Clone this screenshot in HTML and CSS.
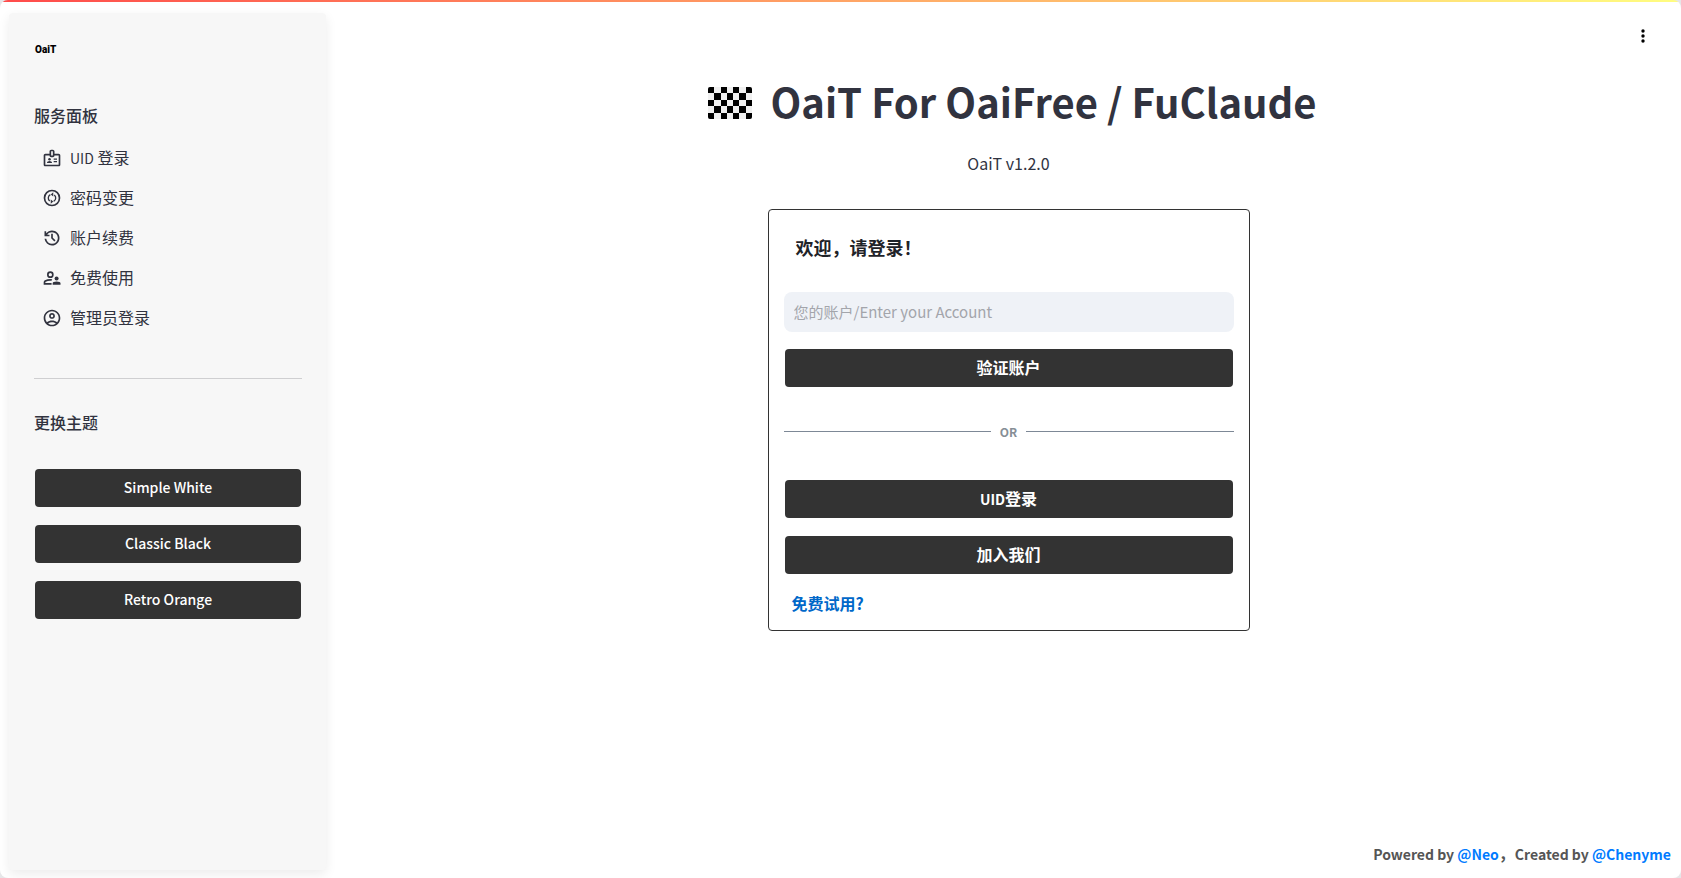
FILE: index.html
```html
<!DOCTYPE html>
<html lang="zh-CN">
<head>
<meta charset="utf-8">
<title>OaiT</title>
<link rel="stylesheet" href="styles.css">
</head>
<body>
<div class="app">
  <aside class="sidebar">
    <div class="logo">OaiT</div>
    <h2 class="section-title">服务面板</h2>
    <nav class="nav">
      <a class="nav-link" href="#uid">
        <svg class="icon" viewBox="0 0 24 24"><path d="M20 7h-5V4c0-1.100-.9-2-2-2h-2c-1.100 0-2 .9-2 2v3H4c-1.100 0-2 .9-2 2v11c0 1.100.9 2 2 2h16c1.100 0 2-.9 2-2V9c0-1.100-.9-2-2-2zm-9-3h2v5h-2V4zm9 16H4V9h5c0 1.100.9 2 2 2h2c1.100 0 2-.9 2-2h5v11z"/><circle cx="9" cy="13.500" r="1.500"/><path d="M6 18v-.43c0-.6.36-1.150.92-1.390a5.300 5.300 0 0 1 4.160 0c.56.240.92.780.92 1.390V18zM14 12.500h4V14h-4zM14 15.500h4V17h-4z"/></svg>
        <span class="nav-text"><span class="latin">UID</span> 登录</span>
      </a>
      <a class="nav-link" href="#password">
        <svg class="icon" viewBox="0 0 24 24"><path fill-rule="evenodd" d="M12 2a10 10 0 1 0 0 20 10 10 0 0 0 0-20zm0 18a8 8 0 1 1 0-16 8 8 0 0 1 0 16z"/><path d="M9.300 15.700A4.600 4.600 0 0 1 10 8M14.700 8.300A4.600 4.600 0 0 1 14 16" fill="none" stroke="currentColor" stroke-width="1.600"/><path d="M13.500 5.200v5L10.500 7.700zM10.500 13.800v5l3-2.500z"/></svg>
        <span class="nav-text">密码变更</span>
      </a>
      <a class="nav-link" href="#renew">
        <svg class="icon" viewBox="0 0 24 24"><path d="M12 21q-3.450 0-6.012-2.288T3.050 13H5.100q.35 2.600 2.313 4.300T12 19q2.925 0 4.963-2.038T19 12t-2.037-4.962T12 5q-1.725 0-3.225.8T6.250 8H9v2H3V4h2v2.350q1.275-1.600 3.113-2.475T12 3q1.875 0 3.513.713t2.850 1.925 1.925 2.850T21 12t-.712 3.513-1.925 2.850-2.850 1.925T12 21m2.800-4.800L11 12.400V7h2v4.600l3.200 3.200z"/></svg>
        <span class="nav-text">账户续费</span>
      </a>
      <a class="nav-link" href="#free">
        <svg class="icon" viewBox="0 0 24 24"><circle cx="10" cy="8" r="3" fill="none" stroke="currentColor" stroke-width="2"/><path d="M2 20v-2.800q0-1.700 1.500-2.400Q6.500 13.300 10 13.300l2.300.1-.9 2q-4-.4-6.800 1.100-.6.300-.6.900v.6h7.500v2z"/><circle cx="17.500" cy="12.700" r="2.400"/><path d="M12.800 20v-1.500q0-2.300 4.700-2.300t4.700 2.300V20z"/></svg>
        <span class="nav-text">免费使用</span>
      </a>
      <a class="nav-link" href="#admin">
        <svg class="icon" viewBox="0 0 24 24"><path d="M12 2C6.480 2 2 6.480 2 12s4.480 10 10 10 10-4.480 10-10S17.520 2 12 2zM7.350 18.500C8.660 17.560 10.260 17 12 17s3.340.56 4.650 1.500C15.340 19.440 13.740 20 12 20s-3.340-.56-4.650-1.500zm10.790-1.380C16.450 15.800 14.320 15 12 15s-4.450.8-6.140 2.120A7.960 7.960 0 0 1 4 12c0-4.420 3.580-8 8-8s8 3.580 8 8c0 1.950-.7 3.730-1.860 5.120z"/><path d="M12 6c-1.930 0-3.500 1.570-3.500 3.500S10.070 13 12 13s3.500-1.570 3.500-3.500S13.930 6 12 6zm0 5c-.83 0-1.500-.67-1.500-1.500S11.170 8 12 8s1.500.67 1.500 1.500S12.830 11 12 11z"/></svg>
        <span class="nav-text">管理员登录</span>
      </a>
    </nav>
    <hr class="rule">
    <h2 class="section-title">更换主题</h2>
    <div class="themes">
      <button class="button latin" type="button">Simple White</button>
      <button class="button latin" type="button">Classic Black</button>
      <button class="button latin" type="button">Retro Orange</button>
    </div>
  </aside>

  <main class="main">
    <header class="toolbar">
      <button class="menu" type="button" aria-label="Menu">
        <svg class="icon" viewBox="0 0 20 20"><circle cx="10" cy="5" r="1.700"/><circle cx="10" cy="10" r="1.700"/><circle cx="10" cy="15" r="1.700"/></svg>
      </button>
    </header>
    <div class="hero">
      <h1 class="title">
        <svg class="checker" viewBox="0 0 44 32" aria-hidden="true">
          <defs><clipPath id="round"><rect width="44" height="32" rx="2"/></clipPath></defs>
          <g clip-path="url(#round)">
            <rect width="44" height="32" fill="#f0f0f0"/>
            <path fill="#000" d="M0 0h6v6H0zM13 0h6v6h-6zM25 0h6v6h-6zM38 0h6v6h-6zM6 6h7v7H6zM19 6h6v7h-6zM31 6h7v7h-7zM0 13h6v6H0zM13 13h6v6h-6zM25 13h6v6h-6zM38 13h6v6h-6zM6 19h7v7H6zM19 19h6v7h-6zM31 19h7v7h-7zM0 26h6v6H0zM13 26h6v6h-6zM25 26h6v6h-6zM38 26h6v6h-6z"/>
          </g>
        </svg>
        <span class="title-text">OaiT For OaiFree / FuClaude</span>
      </h1>
      <p class="version">OaiT v1.2.0</p>
    </div>
    <form class="card">
      <h2 class="card-title">欢迎，请登录！</h2>
      <input class="field" type="text" placeholder="您的账户/Enter your Account" aria-label="您的账户/Enter your Account">
      <button class="button strong" type="button">验证账户</button>
      <div class="divider">OR</div>
      <button class="button strong" type="button"><span class="latin">UID</span>登录</button>
      <button class="button strong" type="button">加入我们</button>
      <a class="trial" href="#trial">免费试用?</a>
    </form>
    <footer class="footer">Powered by <a href="#neo">@Neo</a><span class="comma">，</span>Created by <a href="#chenyme">@Chenyme</a></footer>
  </main>
</div>
</body>
</html>
```
FILE: styles.css
```css
* { box-sizing: border-box; }

body {
  margin: 0;
  background: #e6e6e8;
  color: #31333f;
  font-family: "Noto Sans CJK SC", "Noto Sans", sans-serif;
  font-size: 16px;
  line-height: 24px;
}

.app {
  display: flex;
  min-height: 100vh;
  border-radius: 8px;
  background: linear-gradient(90deg, #ff4b4b, #fffd80) top / 100% 2px no-repeat #fff;
}

h1, h2, p { margin: 0; }
a { text-decoration: none; }
.latin { font-size: 14px; }

.sidebar {
  flex: 0 0 317px;
  margin: 13px 10px 8px 9px;
  padding: 25px 24px 24px 25px;
  border-radius: 4px;
  background: #f7f7f7;
  box-shadow: 0 4px 12px rgba(0, 0, 0, 0.08);
}

.logo {
  padding-left: 1px;
  color: #000;
  font-family: Roboto, sans-serif;
  font-size: 10px;
  font-weight: 900;
}

.section-title {
  font-size: 16px;
  font-weight: 500;
  line-height: 24px;
}

.logo + .section-title { margin-top: 41px; }

.nav {
  display: flex;
  flex-direction: column;
  gap: 8px;
  margin-top: 15px;
}

.nav-link {
  display: flex;
  align-items: center;
  gap: 8px;
  height: 32px;
  padding: 0 8px;
  color: #31333f;
}

.nav-text { padding-bottom: 2px; }

.icon {
  display: block;
  flex: none;
  width: 20px;
  height: 20px;
  fill: currentColor;
}

.rule {
  height: 1px;
  margin: 44px 0 31px;
  border: 0;
  background: #cfcfd1;
}

.themes {
  display: flex;
  flex-direction: column;
  gap: 18px;
  margin: 35px 1px 0;
}

.button {
  display: block;
  width: 100%;
  height: 38px;
  padding: 0 0 2px;
  border: 0;
  border-radius: 4px;
  background: #333;
  color: #fff;
  font-family: inherit;
  font-weight: 500;
  line-height: 24px;
}

.strong {
  font-size: 16px;
  font-weight: 700;
}

.main {
  display: flex;
  flex: 1;
  flex-direction: column;
  align-items: center;
  min-width: 0;
}

.toolbar {
  display: flex;
  justify-content: flex-end;
  width: 100%;
  padding: 20px 22px 0;
}

.menu {
  padding: 6px;
  border: 0;
  background: none;
  color: #000;
}

.hero {
  padding-top: 23px;
  text-align: center;
}

.title {
  display: flex;
  align-items: center;
  gap: 18px;
  padding-left: 8px;
  font-size: 40px;
  font-weight: 700;
  line-height: 52px;
}

.title-text { padding-bottom: 4px; }

.checker {
  width: 44px;
  height: 32px;
}

.version { margin-top: 20px; }

.card {
  display: flex;
  flex-direction: column;
  width: 100%;
  max-width: 482px;
  margin-top: 34px;
  padding: 23px 15px 15px;
  border: 1px solid #333;
  border-radius: 4px;
}

.card-title {
  margin-left: 12px;
  color: #1f2328;
  font-size: 18px;
  font-weight: 700;
  line-height: 28px;
}

.field {
  width: 100%;
  height: 40px;
  margin: 31px 0 17px;
  padding: 0 10px 2px;
  border: 0;
  border-radius: 8px;
  background: #eff2f7;
  color: #31333f;
  font-family: inherit;
  font-size: 15px;
}

.field::placeholder { color: #a3a5ab; }

.card .button {
  width: auto;
  margin: 0 1px;
}

.divider {
  display: flex;
  align-items: center;
  gap: 9px;
  margin: 32px 0 36px;
  color: #868e96;
  font-size: 12px;
  font-weight: 700;
  line-height: 25px;
}

.divider::before,
.divider::after {
  flex: 1;
  height: 1px;
  background: #7d8896;
  content: "";
}

.card .button + .button { margin-top: 18px; }

.trial {
  align-self: flex-start;
  margin: 17px 0 0 8px;
  color: #0068c9;
  font-weight: 700;
}

.footer {
  align-self: flex-end;
  margin-top: auto;
  padding: 0 10px 12px;
  color: #555;
  font-size: 14px;
  font-weight: 700;
}

.footer a { color: #007bff; }
.comma { font-size: 16px; }
```
